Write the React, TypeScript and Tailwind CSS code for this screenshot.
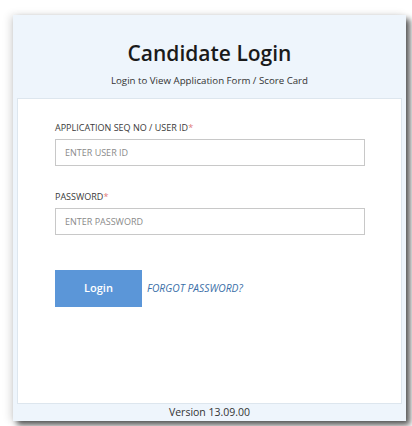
import React from "react";

export default function App() {
  return (
    <div className="w-[412px] h-[426px] bg-white overflow-hidden" style={{ fontFamily: '"Open Sans", sans-serif' }}>
      <div className="ml-[13px] mt-[15px] w-[393px] h-[406px] bg-[#eef5fc] flex flex-col shadow-[4px_4px_6px_rgba(0,0,0,0.65),-3px_0_8px_rgba(0,0,0,0.12)]">
        <div className="h-[83px] flex flex-col items-center">
          <h1 className="mt-[24px] text-[21px] leading-[28px] font-semibold text-[#1a1a1a]">Candidate Login</h1>
          <p className="mt-[8px] text-[9.7px] leading-[12px] text-[#333]">Login to View Application Form / Score Card</p>
        </div>
        <div className="mx-[4px] h-[306px] bg-white border border-[#dde6ee] px-[37px] pt-[23px]">
          <label className="block text-[9px] leading-[12px] text-[#3a3a3a] uppercase">
            APPLICATION SEQ NO / USER ID<span className="text-[#e07a7a]">*</span>
          </label>
          <input
            className="mt-[5px] w-[310px] h-[27px] border border-[#c8c8c8] px-[9px] text-[9px] text-[#333] outline-none placeholder:text-[#8a8a8a]"
            placeholder="ENTER USER ID"
          />
          <label className="block mt-[25px] text-[9px] leading-[12px] text-[#3a3a3a]">
            PASSWORD<span className="text-[#e07a7a]">*</span>
          </label>
          <input
            type="password"
            className="mt-[5px] w-[310px] h-[27px] border border-[#c8c8c8] px-[9px] text-[9px] text-[#333] outline-none placeholder:text-[#8a8a8a]"
            placeholder="ENTER PASSWORD"
          />
          <div className="mt-[35px] flex items-center gap-[5px]">
            <button className="w-[87px] h-[37px] bg-[#5b96d8] text-white text-[11px] font-semibold">Login</button>
            <a className="text-[10.3px] italic text-[#3b6fa8]">FORGOT PASSWORD?</a>
          </div>
        </div>
        <div className="flex-1 flex items-center justify-center text-[10.5px] text-[#333]">Version 13.09.00</div>
      </div>
    </div>
  );
}
